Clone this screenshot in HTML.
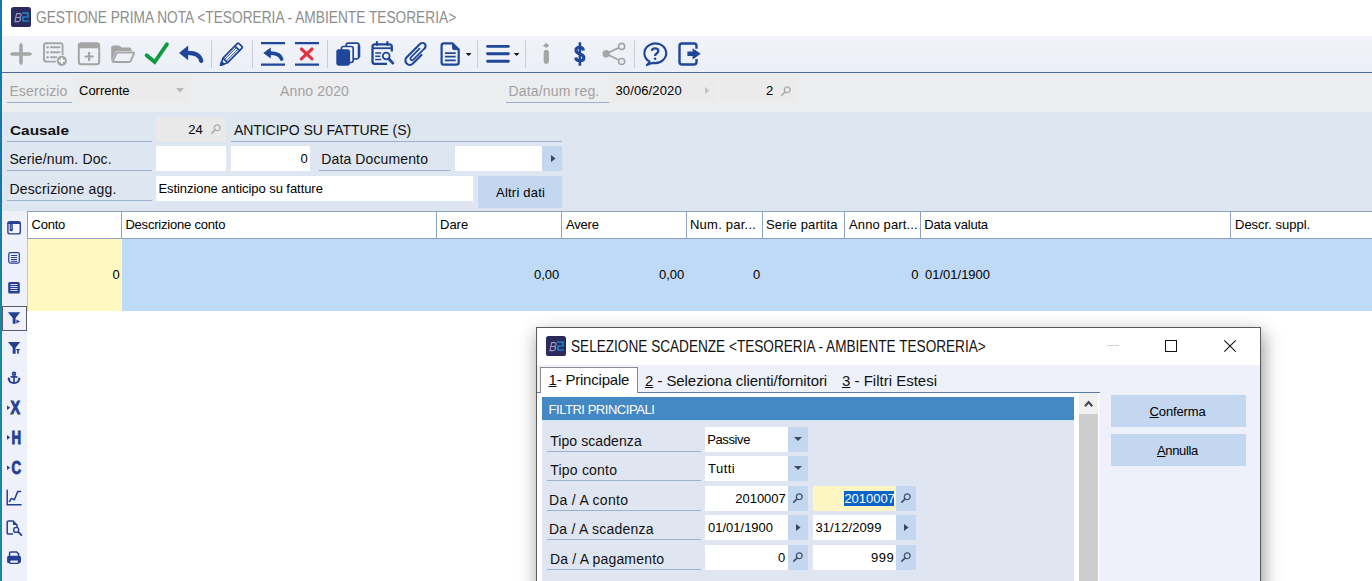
<!DOCTYPE html>
<html><head><meta charset="utf-8">
<style>
html,body{margin:0;padding:0;}
body{width:1372px;height:581px;overflow:hidden;position:relative;background:#fff;font-family:"Liberation Sans",sans-serif;font-size:13px;color:#000;}
.a{position:absolute;}
.t{position:absolute;white-space:nowrap;line-height:1;}
.lbl{position:absolute;white-space:nowrap;font-size:14px;line-height:1;color:#111;}
.ul{position:absolute;height:1px;background:#9cb0d0;}
.inp{position:absolute;background:#fff;}
.btn{position:absolute;background:#c3d7f0;}
.sep{position:absolute;width:1px;top:40px;height:28px;background:#c9cdd6;}
svg{position:absolute;overflow:visible;}
.hd{position:absolute;top:212px;height:26px;background:#fff;}
.vd{position:absolute;top:212px;height:27px;width:1px;background:#8fa3bf;}
</style></head><body>

<!-- main window chrome -->
<div class="a" id="strip" style="left:0;top:0;width:2px;height:581px;background:linear-gradient(#1878ad 0%,#1878ad 38%,#1a85a4 55%,#1a85a4 100%);"></div>
<div class="a" id="toolbar" style="left:2px;top:36px;width:1370px;height:36px;background:linear-gradient(#f1f3f9,#ebeff7);"></div>
<div class="a" id="tbline" style="left:2px;top:72px;width:1370px;height:1px;background:#4f6c97;"></div>
<div class="a" id="greyrow" style="left:2px;top:73px;width:1370px;height:39px;background:#ecedef;"></div>
<div class="a" id="panel" style="left:2px;top:112px;width:1370px;height:99px;background:#dee6f2;"></div>
<div class="a" id="sidebar" style="left:2px;top:211px;width:25px;height:370px;background:#eef1f9;"></div>

<!-- TITLE -->
<div id="title">
<svg style="left:11px;top:7px" width="20" height="20" viewBox="0 0 20 20"><rect x="0" y="0" width="20" height="20" rx="2.6" fill="#2b2a5c"/><path d="M3.9 14.6L5.6 6.6H8.4Q10.4 6.6 10.1 8.5Q9.8 10.3 7.9 10.5Q9.8 10.7 9.5 12.6Q9.2 14.6 7 14.6ZM4.9 10.5H7.9" fill="none" stroke="#9f9bc4" stroke-width="1.1" stroke-linejoin="round"/><path d="M11.2 6.2H17V10H12V14H17.9" fill="none" stroke="#1d80c0" stroke-width="1.7"/></svg>
<div class="t" id="ttl" style="left:35.6px;top:10px;font-size:15.9px;color:#8d8d8d;transform-origin:0 0;transform:scaleX(0.863);">GESTIONE PRIMA NOTA &lt;TESORERIA - AMBIENTE TESORERIA&gt;</div>
</div>
<!-- TOOLBAR ICONS -->
<div id="icons">
<div class="sep" style="left:211.0px;"></div>
<div class="sep" style="left:252.0px;"></div>
<div class="sep" style="left:327.0px;"></div>
<div class="sep" style="left:477.0px;"></div>
<div class="sep" style="left:525.0px;"></div>
<div class="sep" style="left:634.0px;"></div>
<svg id="tbsvg" style="left:0;top:0" width="720" height="76" viewBox="0 0 720 76">
<path d="M9.6 54L12 52.25H19.25V45L21 42.6L22.75 45V52.25H30L32.4 54L30 55.75H22.75V63L21 65.4L19.25 63V55.75H12Z" fill="#a5a5a5"/>
<rect x="44" y="43.2" width="18.6" height="18.4" rx="2.4" fill="none" stroke="#a5a5a5" stroke-width="1.9"/>
<circle cx="47.6" cy="47.2" r="1.25" fill="#a5a5a5"/><path d="M51 47.2H59.4" stroke="#a5a5a5" stroke-width="2.1" stroke-linecap="round"/>
<circle cx="47.6" cy="52.2" r="1.25" fill="#a5a5a5"/><path d="M51 52.2H59.4" stroke="#a5a5a5" stroke-width="2.1" stroke-linecap="round"/>
<circle cx="47.6" cy="57.2" r="1.25" fill="#a5a5a5"/><path d="M51 57.2H56.6" stroke="#a5a5a5" stroke-width="2.1" stroke-linecap="round"/>
<circle cx="61.8" cy="60.8" r="6.1" fill="#eef1f9"/><circle cx="61.8" cy="60.8" r="5.1" fill="#a5a5a5"/><path d="M58.8 60.8H64.8M61.8 57.8V63.8" stroke="#fff" stroke-width="1.9"/>
<rect x="78.8" y="43.4" width="20.4" height="20.9" rx="2.6" fill="none" stroke="#a5a5a5" stroke-width="2"/><path d="M78 48.2V45.6Q78 42.5 81 42.5H97Q100 42.5 100 45.6V48.2Z" fill="#a5a5a5"/>
<path d="M85.4 56.5H92.8M89.1 52.8V60.2" stroke="#a5a5a5" stroke-width="2.2" stroke-linecap="round" fill="none"/>
<path d="M111.2 60.5V47.8Q111.2 45.4 113.6 45.4H118.6Q119.6 45.4 120.4 46.2L121.6 47.4H129.2Q131.6 47.4 131.6 49.8V51H117.4Q116 51 115.4 52.2L111.6 61Z" fill="#a5a5a5"/>
<path d="M117.8 52.5H133.2Q134.4 52.5 133.9 53.6L130.6 61.2Q130.2 62 129.2 62H113.6Q112.4 62 112.9 60.9L116.3 53.4Q116.7 52.5 117.8 52.5Z" fill="none" stroke="#a5a5a5" stroke-width="1.9" stroke-linejoin="round"/>
<path d="M146.6 55.2L154.7 62L167 44.2" stroke="#0e9a3f" stroke-width="3.8" fill="none" stroke-linecap="round" stroke-linejoin="miter"/>
<path d="M179 52.9L188.2 45.6V60.2Z" fill="#1f4699"/><path d="M187.6 52.9C195.6 52.9 200.2 55.8 201.3 61" fill="none" stroke="#1f4699" stroke-width="4.1" stroke-linecap="round"/>
<g transform="translate(220.4 65.4) rotate(-45.5)" fill="none" stroke="#1f4699" stroke-width="1.7" stroke-linejoin="round"><path d="M0.3 0L7 -3.3H27.4Q28.6 -3.3 28.6 -2.1V2.1Q28.6 3.3 27.4 3.3H7Z"/><path d="M7 -3.3V3.3M24 -3.3V3.3" /><path d="M7 -1.15H24M7 1.15H24" stroke-width="0.85"/><path d="M0.3 0L3.4 -1.6V1.6Z" fill="#1f4699"/></g>
<path d="M261 43.1H285M261 64.7H285" stroke="#1f4699" stroke-width="2.2" fill="none"/>
<path d="M263.3 53L270.8 47.6V58.4Z" fill="#1f4699"/><path d="M270.4 53.2C276.6 53.2 280.4 55.2 281.6 59" fill="none" stroke="#1f4699" stroke-width="3.7" stroke-linecap="round"/>
<path d="M295 43.1H319M295 64.7H319" stroke="#1f4699" stroke-width="2.2" fill="none"/>
<path d="M301.4 49L312 58.9M312 49L301.4 58.9" stroke="#e2333e" stroke-width="3.1" stroke-linecap="round" fill="none"/>
<rect x="346.2" y="43.2" width="12.8" height="15.6" rx="2.2" fill="#f4f6fc" stroke="#1f4699" stroke-width="1.7"/><path d="M359 45.4V57" stroke="#1f4699" stroke-width="2.6"/>
<rect x="341.4" y="46.5" width="11.8" height="16" rx="2.2" fill="#f4f6fc" stroke="#1f4699" stroke-width="1.7"/>
<rect x="336.3" y="49.2" width="13.8" height="16.5" rx="2.4" fill="#1f4699"/>
<path d="M391.8 51.4V46.8Q391.8 44.4 389.4 44.4H374.9Q372.5 44.4 372.5 46.8V61.4Q372.5 63.8 374.9 63.8H387" fill="none" stroke="#1f4699" stroke-width="2.3"/>
<path d="M376.9 42.2V45M387.4 42.2V45" stroke="#1f4699" stroke-width="2.2" stroke-linecap="round"/><path d="M372.5 48.2H391.8" stroke="#1f4699" stroke-width="1.8"/>
<path d="M375.2 53H381.2M375.2 56.2H380.4M375.2 59.4H381.2" stroke="#1f4699" stroke-width="1.5"/>
<circle cx="386.2" cy="56" r="3.4" fill="#eef1f9" stroke="#1f4699" stroke-width="1.8"/><path d="M389.2 59.2L392.8 63.1" stroke="#1f4699" stroke-width="2.8" stroke-linecap="round"/>
<g transform="translate(416.4 53.9) rotate(45)" fill="none" stroke="#1f4699" stroke-linecap="round"><path d="M4.4 -2.8V9.3A4.4 4.4 0 0 1 -4.4 9.3V-9.8A3.15 3.15 0 0 1 1.9 -9.8" stroke-width="2.1"/><path d="M1.9 -9.8V6.3A1.7 1.7 0 0 1 -1.5 6.3V-6" stroke-width="1.7"/></g>
<path d="M441.6 45.6Q441.6 43.4 443.8 43.4H452.6L458.7 49.6V62.4Q458.7 64.6 456.5 64.6H443.8Q441.6 64.6 441.6 62.4Z" fill="none" stroke="#1f4699" stroke-width="2.2" stroke-linejoin="round"/><path d="M452.6 43.4L458.7 49.6H454Q452.6 49.6 452.6 48.2Z" fill="#1f4699" stroke="#1f4699" stroke-width="1"/>
<path d="M444.9 53.1H455.7M444.9 56.7H455.7M444.9 60.3H455.7" stroke="#1f4699" stroke-width="1.7"/>
<path d="M465.7 52.9H471.5L468.6 56Z" fill="#111"/>
<path d="M487.6 46.4H508.4M487.6 53.8H508.4M487.6 61.2H508.4" stroke="#1f4699" stroke-width="2.9" stroke-linecap="round"/>
<path d="M513.8 52.9H519.4L516.6 55.9Z" fill="#111"/>
<path d="M546.2 43.4L548.8 45.6L546.2 47.6L543.6 45.6Z" fill="#a5a5a5" stroke="#a5a5a5" stroke-width="0.9" stroke-linejoin="round"/><path d="M546.3 52.4V61.2" stroke="#a5a5a5" stroke-width="5.2" stroke-linecap="round"/>
<path d="M583.4 50.6C583.2 48.4 581.8 47.3 579.9 47.3C577.5 47.3 576 48.5 576 50.3C576 52.4 577.5 53.2 579.9 54C582.5 54.8 583.9 55.7 583.9 57.7C583.9 59.7 582.3 60.8 579.9 60.8C577.5 60.8 576 59.8 575.7 57.5" fill="none" stroke="#1f4699" stroke-width="3.1"/><path d="M579.9 42.3V65.7" stroke="#1f4699" stroke-width="2.6"/>
<path d="M606.2 53.8L621.7 46.4M606.2 53.8L621.7 61.5" stroke="#a5a5a5" stroke-width="1.8"/><circle cx="606.2" cy="53.8" r="3.7" fill="#a5a5a5"/><circle cx="621.7" cy="46.4" r="3" fill="#eef1f9" stroke="#a5a5a5" stroke-width="1.6"/><circle cx="621.7" cy="61.5" r="3" fill="#eef1f9" stroke="#a5a5a5" stroke-width="1.6"/>
<path d="M649.6 61.6A10.9 9.8 0 1 1 653.4 62.9Q651 63 646.9 65.1Q648.9 63.6 649.6 61.6Z" fill="none" stroke="#1f4699" stroke-width="2.1" stroke-linejoin="round"/><path d="M651.9 50.9Q652 48.3 655.1 48.3Q658.3 48.3 658.3 50.9Q658.3 52.4 656.6 53.4Q655.1 54.3 655.1 55.9" fill="none" stroke="#1f4699" stroke-width="2.3"/><circle cx="655.1" cy="58.7" r="1.3" fill="#1f4699"/>
<path d="M696.5 48.8V46Q696.5 43.5 694 43.5H682Q679.5 43.5 679.5 46V62Q679.5 64.5 682 64.5H694Q696.5 64.5 696.5 62V59" fill="none" stroke="#1f4699" stroke-width="2.4"/><path d="M687.4 51.6H692.6V48.2L700.7 53.8L692.6 59.4V56H687.4Z" fill="#1f4699"/>
</svg></div>
<!-- ROW1 -->
<div id="row1">
<div class="lbl" id="l_eser" style="left:9.4px;top:84px;color:#a2a2a2;letter-spacing:0.14px;">Esercizio</div>
<div class="ul" style="left:7px;top:102px;width:65px;"></div>
<div class="a" style="left:77px;top:79px;width:112px;height:23px;background:#ebebeb;"></div>
<div class="t" id="t_corr" style="left:79.0px;top:84px;">Corrente</div>
<svg style="left:176px;top:88px" width="8" height="5" viewBox="0 0 8 5"><path d="M0 0H8L4 4.5Z" fill="#b9b9b9"/></svg>
<div class="lbl" id="l_anno" style="left:280px;top:84px;color:#a2a2a2;letter-spacing:0.14px;">Anno 2020</div>
<div class="lbl" id="l_data" style="left:508.4px;top:84px;color:#a2a2a2;letter-spacing:0.18px;">Data/num reg.</div>
<div class="ul" style="left:506px;top:102px;width:103px;"></div>
<div class="a" style="left:612px;top:79px;width:103px;height:23px;background:#ebebeb;"></div>
<div class="t" id="t_d1" style="left:615.4px;top:84px;letter-spacing:0.14px;">30/06/2020</div>
<svg style="left:705px;top:87px" width="5" height="7" viewBox="0 0 5 7"><path d="M0 0L4.5 3.5L0 7Z" fill="#c2c2c2"/></svg>
<div class="a" style="left:720px;top:79px;width:76px;height:23px;background:#ebebeb;"></div>
<div class="t" id="t_n2" style="left:766px;top:84px;">2</div>
<svg style="left:781px;top:86px" width="10" height="10" viewBox="0 0 10 10"><circle cx="6.2" cy="3.8" r="2.9" fill="none" stroke="#aaa" stroke-width="1.3"/><path d="M4.1 5.9L0.8 9.2" stroke="#aaa" stroke-width="1.6" stroke-linecap="round"/></svg>
</div>
<!-- FORM -->
<div id="form">
<div class="lbl" id="l_caus" style="left:9.8px;top:124px;font-weight:bold;font-size:13.2px;transform-origin:0 0;transform:scaleX(1.165);">Causale</div>
<div class="ul" style="left:7px;top:141px;width:145px;"></div>
<div class="a" style="left:156px;top:117px;width:70px;height:25px;background:#e9e9e9;"></div>
<div class="t" id="t_24" style="left:188.3px;top:123px;">24</div>
<svg style="left:211px;top:124px" width="10" height="10" viewBox="0 0 10 10"><circle cx="6.2" cy="3.8" r="2.9" fill="none" stroke="#aaa" stroke-width="1.3"/><path d="M4.1 5.9L0.8 9.2" stroke="#aaa" stroke-width="1.6" stroke-linecap="round"/></svg>
<div class="lbl" id="l_ant" style="left:234px;top:123px;letter-spacing:-0.07px;">ANTICIPO SU FATTURE (S)</div>
<div class="ul" style="left:231px;top:141px;width:331px;"></div>

<div class="lbl" id="l_serie" style="left:9.4px;top:152px;letter-spacing:0.13px;">Serie/num. Doc.</div>
<div class="ul" style="left:7px;top:170px;width:145px;"></div>
<div class="inp" style="left:156px;top:146px;width:70px;height:25px;"></div>
<div class="inp" style="left:231px;top:146px;width:79px;height:25px;"></div>
<div class="t" id="t_0a" style="left:300.5px;top:152px;">0</div>
<div class="lbl" id="l_ddoc" style="left:321.3px;top:152px;letter-spacing:0.12px;">Data Documento</div>
<div class="ul" style="left:319px;top:170px;width:131px;"></div>
<div class="inp" style="left:455px;top:146px;width:87px;height:25px;"></div>
<div class="btn" style="left:542px;top:146px;width:20px;height:25px;"></div>
<svg style="left:551px;top:155px" width="5" height="7" viewBox="0 0 5 7"><path d="M0 0L4.5 3.5L0 7Z" fill="#3e4556"/></svg>

<div class="lbl" id="l_desc" style="left:9.4px;top:182px;letter-spacing:0.18px;">Descrizione agg.</div>
<div class="ul" style="left:7px;top:200px;width:145px;"></div>
<div class="inp" style="left:156px;top:176px;width:317px;height:25px;"></div>
<div class="t" id="t_est" style="left:158.4px;top:182px;letter-spacing:-0.06px;">Estinzione anticipo su fatture</div>
<div class="btn" style="left:478px;top:176px;width:84px;height:32px;"></div>
<div class="t" id="t_altri" style="left:496px;top:186px;letter-spacing:0.22px;">Altri dati</div>
</div>
<!-- GRID -->
<div id="grid">
<div class="a" style="left:27px;top:211px;width:1345px;height:1px;background:#8fa3bf;"></div>
<div class="a" style="left:28px;top:212px;width:1344px;height:26px;background:#fff;"></div>
<div class="a" style="left:27px;top:238px;width:1345px;height:1px;background:#8fa3bf;"></div>
<div class="vd" style="left:27px;top:211px;height:28px;"></div>
<div class="vd" style="left:121px;top:211px;height:28px;"></div>
<div class="vd" style="left:436px;top:211px;height:28px;"></div>
<div class="vd" style="left:561px;top:211px;height:28px;"></div>
<div class="vd" style="left:686px;top:211px;height:28px;"></div>
<div class="vd" style="left:762px;top:211px;height:28px;"></div>
<div class="vd" style="left:844px;top:211px;height:28px;"></div>
<div class="vd" style="left:920px;top:211px;height:28px;"></div>
<div class="vd" style="left:1230px;top:211px;height:28px;"></div>
<div class="t" id="h0" style="left:31.6px;top:218px;letter-spacing:-0.25px;">Conto</div>
<div class="t" id="h1" style="left:125.4px;top:218px;letter-spacing:-0.21px;">Descrizione conto</div>
<div class="t" id="h2" style="left:440.0px;top:218px;">Dare</div>
<div class="t" id="h3" style="left:566px;top:218px;letter-spacing:-0.2px;">Avere</div>
<div class="t" id="h4" style="left:690.0px;top:218px;letter-spacing:0.23px;">Num. par...</div>
<div class="t" id="h5" style="left:766.0px;top:218px;letter-spacing:0.12px;">Serie partita</div>
<div class="t" id="h6" style="left:849px;top:218px;letter-spacing:0.13px;">Anno part...</div>
<div class="t" id="h7" style="left:924.3px;top:218px;letter-spacing:-0.2px;">Data valuta</div>
<div class="t" id="h8" style="left:1235px;top:218px;">Descr. suppl.</div>
<div class="a" style="left:27px;top:239px;width:1px;height:72px;background:#c3c8d2;"></div>
<div class="a" style="left:28px;top:239px;width:94px;height:72px;background:#fff8c0;"></div>
<div class="a" style="left:122px;top:239px;width:1250px;height:72px;background:#bfdaf7;"></div>
<div class="t" id="c0" style="left:112.6px;top:268px;">0</div>
<div class="t" id="c1" style="left:534px;top:268px;">0,00</div>
<div class="t" id="c2" style="left:659px;top:268px;">0,00</div>
<div class="t" id="c3" style="left:753.1px;top:268px;">0</div>
<div class="t" id="c4" style="left:911.2px;top:268px;">0</div>
<div class="t" id="c5" style="left:925px;top:268px;">01/01/1900</div>
</div>
<!-- SIDE -->
<div id="side">
<div class="a" style="left:2px;top:306px;width:23px;height:23px;border:1px solid #5d5d68;background:#eef1f9;box-sizing:content-box;"></div>
<svg style="left:0;top:0" width="30" height="581" viewBox="0 0 30 581">
<rect x="7.9" y="221.9" width="12.4" height="12" rx="1.8" fill="#f2f4fb" stroke="#263f95" stroke-width="1.4"/><path d="M7.4 224V223.4Q7.4 221.2 9.6 221.2H18.6Q20.8 221.2 20.8 223.4V224Z" fill="#263f95"/><rect x="9.6" y="224" width="3.2" height="7.2" rx="1.2" fill="#263f95"/><path d="M10.5 226H11.9M10.5 228H11.9" stroke="#cfd6ee" stroke-width="0.9"/>
<rect x="8.8" y="252.7" width="10.5" height="10.4" rx="1.5" fill="#f2f4fb" stroke="#263f95" stroke-width="1.25"/><path d="M10.9 255.5H17.2M10.9 257.5H17.2M10.9 259.5H17.2M10.9 261.3H17.2" stroke="#263f95" stroke-width="1"/>
<rect x="8.2" y="282" width="11.6" height="11.6" rx="1.6" fill="#263f95"/><path d="M10.4 284.5H17.6M10.4 286.5H17.6M10.4 288.5H17.6M10.4 290.5H17.6" stroke="#d5dcf2" stroke-width="1"/>
<path d="M7.9 312.3H20.2L15.6 317.9V323.8H12.7V317.9Z" fill="#263f95"/><path d="M16.4 319.4L20 321.5L16.4 323.6Z" fill="#263f95"/>
<path d="M7.9 342.1H20.2L15.6 347.7V353.7H12.7V347.7Z" fill="#263f95"/><path d="M15.8 349H20.2L18.8 350.8V353.7H17.2V350.8Z" fill="#263f95"/>
<g fill="none" stroke="#263f95" stroke-width="1.7"><circle cx="14" cy="373.8" r="1.4"/><path d="M14 375.2V383M10.6 376.8H17.4" /><path d="M8.6 378.6Q9.4 383 14 383Q18.6 383 19.4 378.6" stroke-width="1.9"/></g><path d="M7.4 379.6L8.8 377L10.6 379.6ZM17.4 379.6L19.2 377L20.6 379.6Z" fill="#263f95"/>
<path d="M7 405.4L10.2 407.7L7 410.0Z" fill="#263f95"/><text x="10.4" y="414.3" font-family="Liberation Sans" font-weight="bold" font-size="17.5" fill="#263f95" stroke="#263f95" stroke-width="0.9" textLength="9.6" lengthAdjust="spacingAndGlyphs">X</text>
<path d="M7 435.1L10.2 437.4L7 439.7Z" fill="#263f95"/><text x="11.5" y="444" font-family="Liberation Sans" font-weight="bold" font-size="17.5" fill="#263f95" stroke="#263f95" stroke-width="0.9" textLength="9.6" lengthAdjust="spacingAndGlyphs">H</text>
<path d="M7 465.4L10.2 467.7L7 470.0Z" fill="#263f95"/><text x="11.6" y="474.3" font-family="Liberation Sans" font-weight="bold" font-size="17.5" fill="#263f95" stroke="#263f95" stroke-width="0.9" textLength="9.6" lengthAdjust="spacingAndGlyphs">C</text>
<path d="M7.2 489.8V504.7H21.6" fill="none" stroke="#263f95" stroke-width="1.5"/><path d="M9.2 502L11.4 498.4L14.4 499.8L17.8 491.4H21.2" fill="none" stroke="#263f95" stroke-width="1.5" stroke-linejoin="round"/>
<path d="M17 528V525L13 520.9H8.4Q7.2 520.9 7.2 522.1V532.9Q7.2 534.1 8.4 534.1H13" fill="none" stroke="#263f95" stroke-width="1.5"/><path d="M13 520.9L17 525H13Z" fill="#263f95"/><circle cx="16.2" cy="529.9" r="2.5" fill="none" stroke="#263f95" stroke-width="1.4"/><path d="M18.2 531.9L21.4 535.1" stroke="#263f95" stroke-width="1.8" stroke-linecap="round"/>
<path d="M9.6 556.5V552.9Q9.6 551.9 10.6 551.9H16.6L18.6 553.9V556.5" fill="none" stroke="#263f95" stroke-width="1.5"/><rect x="7.1" y="555.8" width="13.9" height="7.4" rx="1.8" fill="#263f95"/><rect x="9.8" y="560" width="8.6" height="3.4" rx="0.6" fill="#e9edf8" stroke="#263f95" stroke-width="1.2"/>
</svg></div>
<!-- DIALOG -->
<div id="dialog">
<div class="a" id="dlg" style="left:536px;top:327px;width:723px;height:270px;background:#eef1f9;border:1px solid #5a5a5a;box-shadow:2px 6px 17px 0 rgba(0,0,0,0.43);"></div>
<div class="a" style="left:537px;top:328px;width:723px;height:37px;background:#fff;"></div>
<svg style="left:546px;top:336px" width="20" height="20" viewBox="0 0 20 20"><rect x="0" y="0" width="20" height="20" rx="2.6" fill="#2b2a5c"/><path d="M3.9 14.6L5.6 6.6H8.4Q10.4 6.6 10.1 8.5Q9.8 10.3 7.9 10.5Q9.8 10.7 9.5 12.6Q9.2 14.6 7 14.6ZM4.9 10.5H7.9" fill="none" stroke="#9f9bc4" stroke-width="1.1" stroke-linejoin="round"/><path d="M11.2 6.2H17V10H12V14H17.9" fill="none" stroke="#1d80c0" stroke-width="1.7"/></svg>
<div class="t" id="dttl" style="left:571.2px;top:339px;font-size:15.9px;color:#111;transform-origin:0 0;transform:scaleX(0.856);">SELEZIONE SCADENZE &lt;TESORERIA - AMBIENTE TESORERIA&gt;</div>
<div class="a" style="left:1107px;top:345px;width:12px;height:1px;background:#cfcfcf;"></div>
<div class="a" style="left:1165px;top:340px;width:10px;height:10px;border:1px solid #111;"></div>
<svg style="left:1224px;top:340px" width="12" height="12" viewBox="0 0 12 12"><path d="M0.3 0.3L11.7 11.7M11.7 0.3L0.3 11.7" stroke="#111" stroke-width="1.1"/></svg>
<div class="a" style="left:537px;top:392px;width:563px;height:1px;background:#5c7aa6;"></div>
<div class="a" style="left:1099px;top:393px;width:1px;height:200px;background:#f4f6fa;"></div>
<div class="a" style="left:540px;top:367px;width:98px;height:26px;background:#fff;border:1px solid #8a8a8a;border-bottom:none;box-sizing:border-box;"></div>
<div class="lbl" id="tab1" style="left:548.5px;top:372px;font-size:15px;letter-spacing:-0.21px;"><u>1</u>- Principale</div>
<div class="lbl" id="tab2" style="left:645.0px;top:373px;font-size:15px;letter-spacing:-0.07px;"><u>2</u> - Seleziona clienti/fornitori</div>
<div class="lbl" id="tab3" style="left:842px;top:373px;font-size:15px;"><u>3</u> - Filtri Estesi</div>
<div class="a" style="left:537px;top:393px;width:562px;height:200px;background:#fff;"></div>
<div class="a" style="left:542px;top:397px;width:532px;height:200px;background:#dfe6f2;"></div>
<div class="a" style="left:542px;top:397px;width:532px;height:23px;background:#4489c4;"></div>
<div class="a" style="left:542px;top:420px;width:532px;height:1px;background:#cde3f6;"></div>
<div class="t" id="filtri" style="left:548.5px;top:403px;color:#fff;letter-spacing:-0.46px;">FILTRI PRINCIPALI</div>
<div class="a" style="left:1079px;top:393px;width:19px;height:21px;background:#f0f0f0;"></div>
<svg style="left:1084px;top:400px" width="10" height="7" viewBox="0 0 10 7"><path d="M1 6.2L4.65 2L8.3 6.2" fill="none" stroke="#484848" stroke-width="2.1"/></svg>
<div class="a" style="left:1079px;top:414px;width:19px;height:180px;background:#cdcdcd;"></div>
<div class="btn" style="left:1111px;top:395px;width:135px;height:32px;"></div>
<div class="t" id="conf" style="left:1149.6px;top:405px;letter-spacing:-0.15px;"><u>C</u>onferma</div>
<div class="btn" style="left:1111px;top:434px;width:135px;height:32px;"></div>
<div class="t" id="annu" style="left:1157px;top:444px;letter-spacing:-0.35px;"><u>A</u>nnulla</div>
<div class="lbl" id="dl0" style="left:550.2px;top:434px;letter-spacing:0.08px;">Tipo scadenza</div>
<div class="ul" style="left:547px;top:451px;width:154px;"></div>
<div class="inp" style="left:705px;top:427px;width:83px;height:25px;"></div>
<div class="btn" style="left:788px;top:427px;width:20px;height:25px;"></div>
<div class="lbl" id="dl1" style="left:550.2px;top:463px;letter-spacing:0.22px;">Tipo conto</div>
<div class="ul" style="left:547px;top:480px;width:154px;"></div>
<div class="inp" style="left:705px;top:456px;width:83px;height:25px;"></div>
<div class="btn" style="left:788px;top:456px;width:20px;height:25px;"></div>
<div class="lbl" id="dl2" style="left:549.0px;top:493px;letter-spacing:0.32px;">Da / A conto</div>
<div class="ul" style="left:547px;top:510px;width:154px;"></div>
<div class="inp" style="left:705px;top:486px;width:83px;height:25px;"></div>
<div class="btn" style="left:788px;top:486px;width:20px;height:25px;"></div>
<div class="inp" style="left:813px;top:486px;width:83px;height:25px;background:#fdf6c2;"></div>
<div class="btn" style="left:896px;top:486px;width:20px;height:25px;"></div>
<div class="lbl" id="dl3" style="left:549.0px;top:522px;letter-spacing:0.24px;">Da / A scadenza</div>
<div class="ul" style="left:547px;top:539px;width:154px;"></div>
<div class="inp" style="left:705px;top:515px;width:83px;height:25px;"></div>
<div class="btn" style="left:788px;top:515px;width:20px;height:25px;"></div>
<div class="inp" style="left:813px;top:515px;width:83px;height:25px;background:#fff;"></div>
<div class="btn" style="left:896px;top:515px;width:20px;height:25px;"></div>
<div class="lbl" id="dl4" style="left:550px;top:552px;letter-spacing:0.18px;">Da / A pagamento</div>
<div class="ul" style="left:547px;top:569px;width:154px;"></div>
<div class="inp" style="left:705px;top:545px;width:83px;height:25px;"></div>
<div class="btn" style="left:788px;top:545px;width:20px;height:25px;"></div>
<div class="inp" style="left:813px;top:545px;width:83px;height:25px;background:#fff;"></div>
<div class="btn" style="left:896px;top:545px;width:20px;height:25px;"></div>
<svg style="left:794px;top:437px" width="8" height="4" viewBox="0 0 8 4"><path d="M0 0H8L4 4Z" fill="#3c4a66"/></svg>
<svg style="left:794px;top:466px" width="8" height="4" viewBox="0 0 8 4"><path d="M0 0H8L4 4Z" fill="#3c4a66"/></svg>
<svg style="left:793px;top:493px" width="10" height="10" viewBox="0 0 10 10"><circle cx="6.2" cy="3.8" r="2.9" fill="none" stroke="#46526b" stroke-width="1.3"/><path d="M4.1 5.9L0.8 9.2" stroke="#46526b" stroke-width="1.7" stroke-linecap="round"/></svg>
<svg style="left:901px;top:493px" width="10" height="10" viewBox="0 0 10 10"><circle cx="6.2" cy="3.8" r="2.9" fill="none" stroke="#46526b" stroke-width="1.3"/><path d="M4.1 5.9L0.8 9.2" stroke="#46526b" stroke-width="1.7" stroke-linecap="round"/></svg>
<svg style="left:796px;top:524px" width="5" height="7" viewBox="0 0 5 7"><path d="M0 0L4.5 3.5L0 7Z" fill="#3e4556"/></svg>
<svg style="left:904px;top:524px" width="5" height="7" viewBox="0 0 5 7"><path d="M0 0L4.5 3.5L0 7Z" fill="#3e4556"/></svg>
<svg style="left:793px;top:552px" width="10" height="10" viewBox="0 0 10 10"><circle cx="6.2" cy="3.8" r="2.9" fill="none" stroke="#46526b" stroke-width="1.3"/><path d="M4.1 5.9L0.8 9.2" stroke="#46526b" stroke-width="1.7" stroke-linecap="round"/></svg>
<svg style="left:901px;top:552px" width="10" height="10" viewBox="0 0 10 10"><circle cx="6.2" cy="3.8" r="2.9" fill="none" stroke="#46526b" stroke-width="1.3"/><path d="M4.1 5.9L0.8 9.2" stroke="#46526b" stroke-width="1.7" stroke-linecap="round"/></svg>
<div class="t" id="v_pass" style="left:707.2px;top:433px;letter-spacing:-0.38px;">Passive</div>
<div class="t" id="v_tutti" style="left:708px;top:462px;letter-spacing:0.47px;">Tutti</div>
<div class="t" id="v_c1" style="left:735.2px;top:492px;">2010007</div>
<div class="a" style="left:844px;top:491px;width:50px;height:15px;background:#0a63c9;"></div>
<div class="t" id="v_c2" style="left:844.4px;top:492px;color:#fff;">2010007</div>
<div class="t" id="v_s1" style="left:708px;top:521px;">01/01/1900</div>
<div class="t" id="v_s2" style="left:815.4px;top:521px;letter-spacing:0.11px;">31/12/2099</div>
<div class="t" id="v_p1" style="left:778px;top:551px;">0</div>
<div class="t" id="v_p2" style="left:871.0px;top:551px;letter-spacing:0.5px;">999</div>
</div>

</body></html>
